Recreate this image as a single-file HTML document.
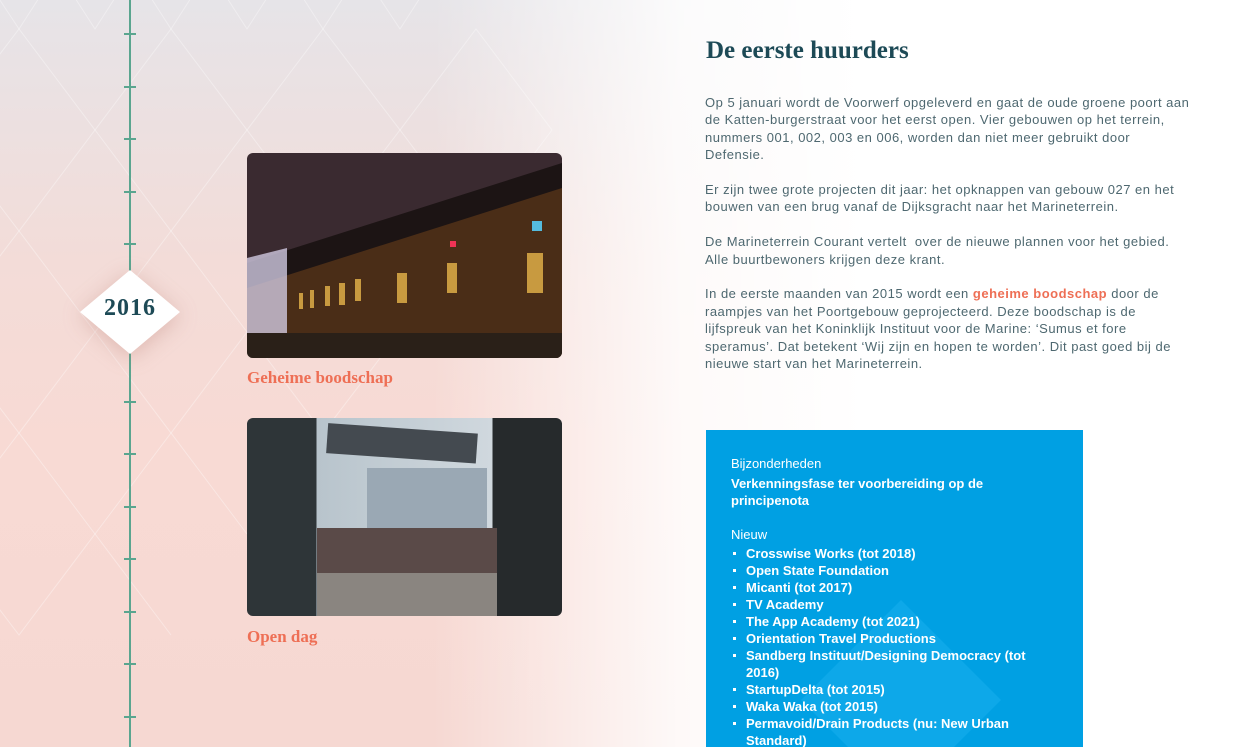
<!DOCTYPE html>
<html><head><meta charset="utf-8"><style>
*{margin:0;padding:0;box-sizing:border-box}
html,body{width:1236px;height:747px;overflow:hidden}
body{position:relative;font-family:"Liberation Sans",sans-serif;
background:linear-gradient(90deg,rgba(255,255,255,0) 0%,rgba(255,255,255,0) 35%,rgba(255,255,255,.85) 55%,#fff 70%),linear-gradient(180deg,#e6e4e8 0%,#f3dcd8 35%,#f8dad4 60%,#f6d8d2 100%);}
.line{position:absolute;left:129px;top:0;width:2px;height:747px;background:#5aa58f}
.tick{position:absolute;left:124px;width:12px;height:2px;background:#5aa58f}
.dia{position:absolute;left:80px;top:270px;width:100px;height:84px}
.yr{position:absolute;left:80px;top:295px;width:100px;text-align:center;font-family:"Liberation Serif",serif;font-weight:bold;font-size:24px;color:#1d4a56;letter-spacing:1px}
.ph{position:absolute;left:247px;width:315px;border-radius:6px;overflow:hidden}
.cap{position:absolute;left:247px;font-family:"Liberation Serif",serif;font-weight:bold;font-size:17px;color:#ee6f55}
h1{position:absolute;left:706px;top:37px;font-family:"Liberation Serif",serif;font-size:25px;color:#1d4a56;font-weight:bold}
.txt{position:absolute;left:705px;top:94px;width:488px;font-size:13px;line-height:17.4px;color:#4e6870;letter-spacing:.5px}
.txt p{margin-bottom:17.4px}
.txt b{color:#ee6f55}
.box{position:absolute;left:706px;top:430px;width:377px;height:317px;background:#00a0e3;color:#fff;padding:25px 25px;font-size:13px;overflow:hidden}
.box ul{list-style:none;font-weight:bold;line-height:17px}
.box li{padding-left:15px;position:relative}
.box li:before{content:"";position:absolute;left:2px;top:7px;width:3px;height:3px;background:#fff}
</style></head><body>
<svg style="position:absolute;left:0;top:0" width="700" height="747">
<g stroke="#fff" stroke-opacity=".35" fill="none" stroke-width="1">
<path d="M-58 130 L19 29 L95 130 L171 29 L247 130 L323 29 L400 130 L476 29 L552 130"/>
<path d="M-20 -30 L19 29 L57 -30 L95 29 L133 -30 L171 29 L209 -30 L247 29 L285 -30 L323 29 L361 -30 L400 29 L438 -30"/>
<path d="M-58 130 L19 231 L95 130 L171 231 L247 130 L323 231 L400 130 L476 231 L552 130"/>
<path d="M-58 332 L19 231 L95 332 L171 231 L247 332 L323 231 L400 332 L476 231"/>
<path d="M-58 332 L19 433 L95 332 L171 433 L247 332 L323 433 L400 332"/>
<path d="M-58 534 L19 433 L95 534 L171 433 L247 534"/>
<path d="M-58 534 L19 635 L95 534 L171 635"/>
</g></svg>
<div class="line"></div>
<div class="tick" style="top:33px"></div><div class="tick" style="top:86px"></div><div class="tick" style="top:138px"></div><div class="tick" style="top:191px"></div><div class="tick" style="top:243px"></div>
<div class="tick" style="top:401px"></div><div class="tick" style="top:453px"></div><div class="tick" style="top:506px"></div><div class="tick" style="top:558px"></div><div class="tick" style="top:611px"></div><div class="tick" style="top:663px"></div><div class="tick" style="top:716px"></div>
<svg class="dia" viewBox="0 0 100 84" style="filter:drop-shadow(0 4px 10px rgba(180,120,110,.35))"><polygon points="50,0 100,42 50,84 0,42" fill="#fff"/></svg>
<div class="yr">2016</div>

<div class="ph" style="top:153px;height:205px;background:#3a2a30">
<svg width="315" height="205"><polygon points="0,120 315,20 315,205 0,205" fill="#4a2d17"/><polygon points="0,110 315,10 315,35 0,135" fill="#1c1414"/><polygon points="0,105 40,95 40,205 0,205" fill="#cfc8e0" opacity=".8"/><rect x="0" y="180" width="315" height="25" fill="#2a2018"/>
<g fill="#c89a40"><rect x="52" y="140" width="4" height="16"/><rect x="63" y="137" width="4" height="18"/><rect x="78" y="133" width="5" height="20"/><rect x="92" y="130" width="6" height="22"/><rect x="108" y="126" width="6" height="22"/><rect x="150" y="120" width="10" height="30"/><rect x="200" y="110" width="10" height="30"/><rect x="280" y="100" width="16" height="40"/></g>
<rect x="285" y="68" width="10" height="10" fill="#5bd"/><rect x="203" y="88" width="6" height="6" fill="#e35"/></svg></div>
<div class="cap" style="top:368px">Geheime boodschap</div>

<div class="ph" style="top:418px;height:198px;background:linear-gradient(90deg,#2e3538 0%,#2e3538 22%,#b8c4cc 22%,#d0d8de 78%,#262a2c 78%)">
<svg width="315" height="198"><rect x="80" y="10" width="150" height="30" fill="#444a50" transform="rotate(4 150 25)"/><rect x="120" y="50" width="120" height="90" fill="#9aa8b4"/><rect x="70" y="110" width="180" height="45" fill="#5a4a48"/><rect x="70" y="155" width="180" height="43" fill="#8a8580"/></svg></div>
<div class="cap" style="top:627px">Open dag</div>

<h1>De eerste huurders</h1>
<div class="txt">
<p>Op 5 januari wordt de Voorwerf opgeleverd en gaat de oude groene poort aan de Katten-burgerstraat voor het eerst open. Vier gebouwen op het terrein, nummers 001, 002, 003 en 006, worden dan niet meer gebruikt door Defensie.</p>
<p>Er zijn twee grote projecten dit jaar: het opknappen van gebouw 027 en het bouwen van een brug vanaf de Dijksgracht naar het Marineterrein.</p>
<p>De Marineterrein Courant vertelt&nbsp; over de nieuwe plannen voor het gebied.<br>Alle buurtbewoners krijgen deze krant.</p>
<p>In de eerste maanden van 2015 wordt een <b>geheime boodschap</b> door de raampjes van het Poortgebouw geprojecteerd. Deze boodschap is de lijfspreuk van het Koninklijk Instituut voor de Marine: ‘Sumus et fore speramus’. Dat betekent ‘Wij zijn en hopen te worden’. Dit past goed bij de nieuwe start van het Marineterrein.</p>
</div>
<div class="box">
<svg style="position:absolute;left:95px;top:170px" width="200" height="200"><polygon points="100,0 200,100 100,200 0,100" fill="#1ab0f0" opacity=".5"/></svg>
<div style="position:relative">
<div style="line-height:17px">Bijzonderheden</div>
<div style="font-weight:bold;line-height:17px;margin-top:3px">Verkenningsfase ter voorbereiding op de principenota</div>
<div style="margin-top:17px;line-height:17px">Nieuw</div>
<ul style="margin-top:2px">
<li>Crosswise Works (tot 2018)</li><li>Open State Foundation</li><li>Micanti (tot 2017)</li><li>TV Academy</li><li>The App Academy (tot 2021)</li><li>Orientation Travel Productions</li><li>Sandberg Instituut/Designing Democracy (tot 2016)</li><li>StartupDelta (tot 2015)</li><li>Waka Waka (tot 2015)</li><li>Permavoid/Drain Products (nu: New Urban Standard)</li>
</ul></div></div>
</body></html>
